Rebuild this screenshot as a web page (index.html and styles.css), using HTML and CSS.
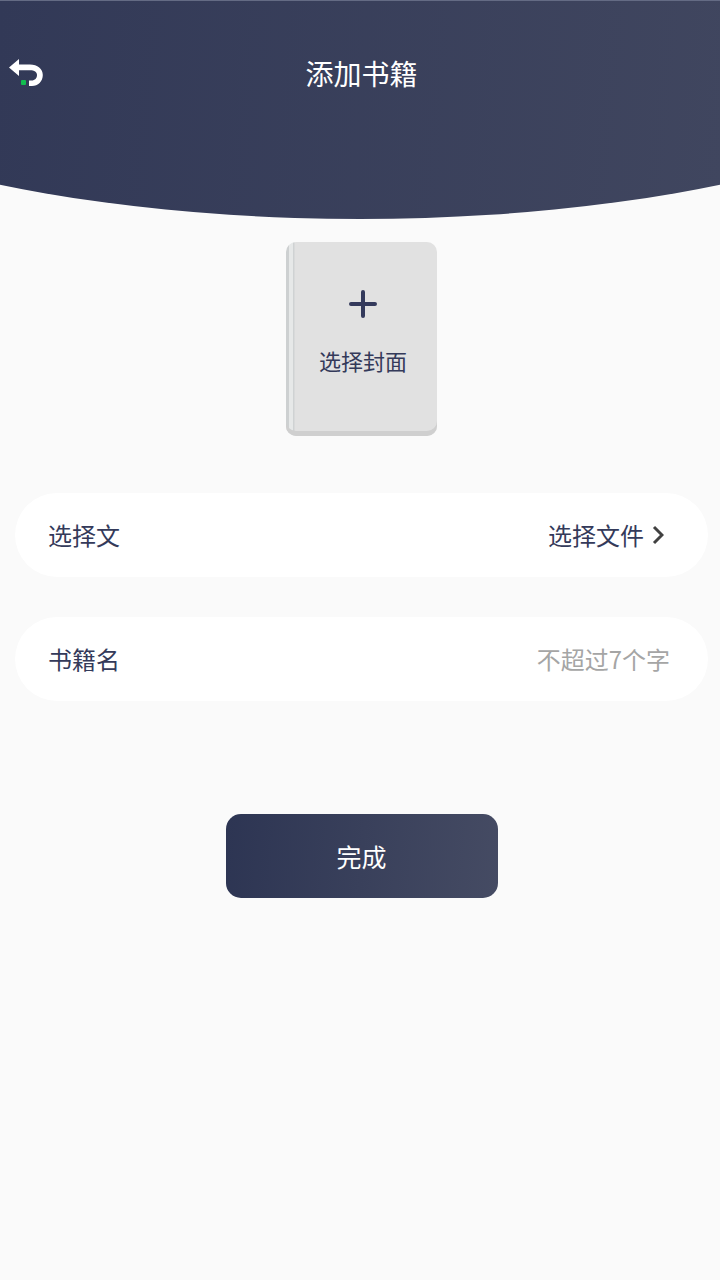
FILE: index.html
```html
<!DOCTYPE html>
<html lang="zh-CN">
<head>
<meta charset="utf-8">
<meta name="viewport" content="width=device-width, initial-scale=1">
<title>添加书籍</title>
<link rel="stylesheet" href="styles.css">
</head>
<body>
<header class="header">
  <button class="back" type="button" aria-label="返回">
    <svg width="36" height="32" viewBox="0 0 36 32" aria-hidden="true">
      <path d="M1 10.500 11 2V7.500H22C29.500 7.500 34.800 12 34.800 18C34.800 24.500 30 29 24 29H21V23.500H23.500C27 23.500 29 21 29 18C29 15 26.500 13.200 22 13.200H11V19Z" fill="#fff"/>
      <rect x="13" y="23" width="5" height="5" rx="1" fill="#12bd50"/>
    </svg>
  </button>
  <h1 class="title">添加书籍</h1>
</header>
<main class="content">
  <button class="cover" type="button">
    <svg width="28" height="28" viewBox="0 0 28 28" aria-hidden="true">
      <path d="M14 2V26M2 14H26" stroke="#343a5c" stroke-width="4" stroke-linecap="round"/>
    </svg>
    <span>选择封面</span>
  </button>
  <form class="form">
    <div class="row">
      <label for="file">选择文</label>
      <button class="picker" id="file" type="button">选择文件
        <svg width="12" height="20" viewBox="0 0 12 20" aria-hidden="true">
          <path d="M2 2 10 10 2 18" fill="none" stroke="#414141" stroke-width="3"/>
        </svg>
      </button>
    </div>
    <div class="row row-name">
      <label for="name">书籍名</label>
      <input class="name" id="name" type="text" maxlength="7" placeholder="不超过7个字">
    </div>
    <button class="submit" type="button">完成</button>
  </form>
</main>
</body>
</html>
```
FILE: styles.css
```css
* {
  box-sizing: border-box;
}

body {
  margin: 0;
  background: #fafafa;
  color: #343a5a;
  font-family: "Noto Sans CJK SC", sans-serif;
  font-size: 24px;
  line-height: 36px;
}

button,
input {
  margin: 0;
  padding: 0;
  border: 0;
  background: none;
  color: inherit;
  font: inherit;
}

.header {
  display: grid;
  grid-template-columns: 48px 1fr 48px;
  align-items: center;
  height: 219px;
  padding: 53px 0 127px;
  border-top: 1px solid #646b84;
  background: linear-gradient(95deg, #323957, #40465f);
  clip-path: ellipse(93% 100% at 50% 0);
  color: #fff;
}

.back {
  display: flex;
  padding-left: 8px;
}

.title {
  grid-column: 2;
  margin: 0;
  padding-left: 3px;
  font-size: 28px;
  font-weight: 400;
  text-align: center;
}

.content {
  display: flex;
  flex-direction: column;
  align-items: center;
  padding: 23px 12px 40px 15px;
}

.cover {
  display: flex;
  flex-direction: column;
  align-items: center;
  gap: 24px;
  width: 151px;
  height: 194px;
  padding: 48px 0 0 3px;
  border-radius: 10px;
  background: linear-gradient(90deg, #cdd0d1 0 3px, #e6e8e8 3px 7px, #cfd2d3 7px 8px, #e1e1e1 9px);
  box-shadow: inset 0 -5px #cfcfcf;
  font-size: 22px;
}

.form {
  display: flex;
  flex-direction: column;
  gap: 40px;
  width: 100%;
  margin-top: 57px;
}

.row {
  display: flex;
  align-items: center;
  justify-content: space-between;
  height: 84px;
  padding: 0 44px 0 33px;
  border-radius: 42px;
  background: #fff;
}

.row-name {
  padding-right: 38px;
}

.picker {
  display: flex;
  align-items: center;
  gap: 8px;
}

.name {
  flex: 1;
  min-width: 0;
  text-align: right;
}

.name::placeholder {
  color: #a5a5a5;
  opacity: 1;
}

.submit {
  align-self: center;
  width: 272px;
  height: 84px;
  margin-top: 73px;
  border-radius: 15px;
  background: linear-gradient(95deg, #2d3553, #454b63);
  color: #fff;
  font-size: 25px;
}
```
